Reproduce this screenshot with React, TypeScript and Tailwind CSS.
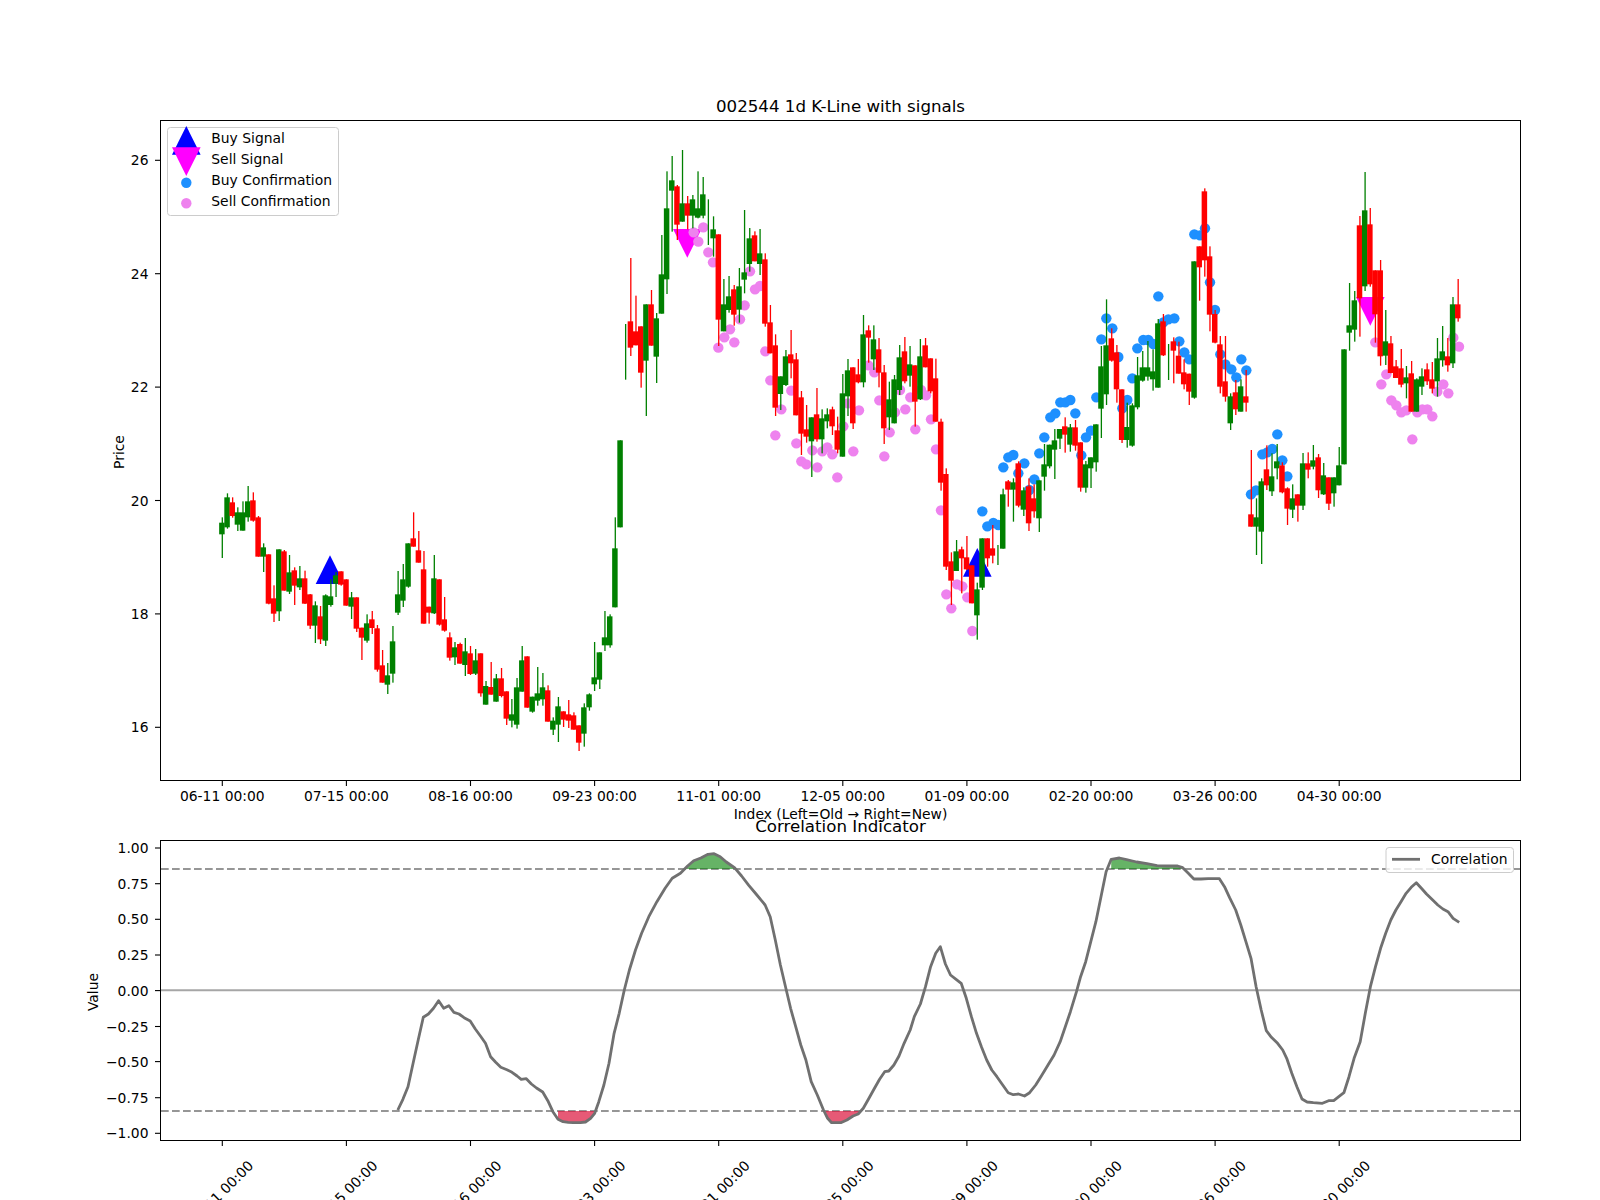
// 002544 daily K-line figure. Candle and marker data were read off the chart,
// so values are stored in crop pixels (3x) with the origin of the crop they came from.
type Row = [number, number, number, number, "G" | "R"]
type Pt = [number, number]

const barX = (i: number) => 222.3 + 5.171 * i
const TICKS = ["06-11 00:00", "07-15 00:00", "08-16 00:00", "09-23 00:00", "11-01 00:00", "12-05 00:00", "01-09 00:00", "02-20 00:00", "03-26 00:00", "04-30 00:00"]
const tickX = TICKS.map((_, i) => 222.3 + 124.1 * i)

// wick top, body top, body bottom, wick bottom, colour
const seg0: Row[] = [
  [112,128,163,234,"G"],[40,52,142,146,"G"],[52,67,108,113,"R"],[82,97,134,153,"G"],[64,97,152,152,"G"],[18,64,112,125,"G"],[37,61,122,125,"R"],[108,112,230,230,"R"],[190,202,230,276,"G"],[223,223,371,373,"R"],
  [316,355,401,426,"R"],[208,208,394,423,"G"],[210,214,332,332,"R"],[225,277,335,342,"G"],[262,271,317,375,"R"],[258,295,322,330,"G"],[272,295,371,372,"R"],[342,343,437,447,"R"],[364,376,437,489,"G"],[378,409,478,492,"R"],
  [343,346,482,498,"G"],[298,349,375,380,"G"],[276,286,311,351,"G"],[274,274,314,317,"R"],[298,298,377,377,"R"],[336,352,380,417,"G"],[352,352,446,456,"R"],[443,443,473,540,"R"],[403,430,482,488,"G"],[393,418,444,462,"R"],
  [435,445,569,575,"R"],[510,556,608,608,"R"],[549,586,614,642,"G"],[438,484,581,608,"G"],[273,343,398,405,"G"],[252,298,362,381,"G"],[190,190,320,323,"G"],[97,175,200,200,"R"],[153,211,248,248,"R"],[213,268,431,431,"R"],
  [380,380,398,431,"R"],[225,295,400,402,"G"],[298,298,434,437,"R"],[351,418,452,455,"R"],[457,472,533,542,"R"],[486,502,532,555,"G"],[488,492,551,551,"R"],[474,514,555,588,"G"],[498,520,582,585,"R"],[507,541,581,585,"G"],
  [520,520,640,650,"R"],[603,618,674,674,"G"],[546,621,644,644,"R"],[582,595,665,665,"G"],[564,595,648,652,"R"],[634,634,716,735,"R"],[657,703,722,742,"G"],[594,622,734,746,"G"],[498,541,635,635,"G"],[529,529,683,683,"R"],
  [650,650,695,698,"G"],[561,640,662,677,"G"],[579,622,658,677,"G"],[616,631,725,725,"R"],[712,722,749,765,"G"],[651,679,734,786,"G"],[694,694,719,741,"R"],[660,703,722,744,"R"],[697,706,749,749,"R"],[736,736,788,813,"R"],
  [670,682,761,800,"G"],[640,643,682,692,"G"],[486,592,613,633,"G"],[517,517,599,627,"G"],[393,472,496,513,"G"],[403,409,496,503,"G"],[112,205,382,382,"G"],
]
const seg1: Row[] = [
  [931,931,1192,1192,"G"],[582,660,660,749,"G"],[384,574,653,678,"R"],[497,604,646,646,"R"],[589,589,728,773,"R"],[523,523,692,858,"G"],[480,523,647,647,"R"],[549,565,680,759,"G"],[315,433,551,551,"G"],[124,235,448,492,"G"],
  [78,151,182,305,"G"],[165,169,284,330,"R"],[60,220,275,275,"G"],[198,220,257,298,"R"],[195,208,257,295,"G"],[124,235,263,265,"G"],[141,193,257,265,"G"],[208,280,280,345,"G"],[259,298,325,380,"G"],[313,313,569,648,"R"],
  [447,523,604,604,"G"],[438,499,540,548,"G"],[465,478,554,587,"R"],[414,469,539,578,"G"],[240,427,449,490,"G"],[294,325,402,425,"G"],[304,316,394,394,"R"],[297,370,402,435,"G"],[370,388,581,590,"R"],[525,577,670,670,"R"],
  [613,646,833,858,"R"],[739,739,792,840,"G"],[660,679,765,768,"G"],[600,673,700,745,"R"],[669,688,856,856,"R"],[783,802,911,975,"R"],[825,898,920,938,"R"],[862,862,934,1041,"G"],[774,853,928,935,"R"],[838,865,928,970,"G"],
  [835,853,874,895,"G"],[830,838,889,915,"R"],[860,901,959,970,"R"],[732,790,980,980,"G"],[687,721,799,858,"G"],[712,712,880,897,"R"],[687,733,757,760,"R"],[555,613,757,772,"G"],[586,601,623,698,"R"],[586,628,688,720,"G"],
  [624,658,728,772,"R"],[705,727,895,942,"R"],[755,808,862,900,"G"],[735,748,880,880,"G"],[645,682,780,795,"G"],[621,664,754,760,"R"],[648,703,737,770,"G"],[706,706,815,890,"R"],[627,679,808,810,"G"],[624,646,712,712,"R"],
  [685,685,784,790,"R"],[686,745,875,875,"R"],[866,875,1058,1082,"R"],
]
const seg2: Row[] = [
  [205,222,500,510,"R"],[457,484,542,615,"R"],[420,454,513,513,"G"],[440,448,475,580,"R"],[408,472,508,510,"R"],[496,496,610,610,"R"],[548,568,646,719,"G"],[415,415,563,570,"G"],[415,415,475,500,"R"],[375,445,467,490,"R"],
  [435,465,465,495,"G"],[266,283,446,446,"G"],[240,244,269,320,"R"],[235,247,269,365,"G"],[184,190,317,322,"R"],[262,271,329,348,"G"],[235,259,370,393,"R"],[253,295,334,353,"R"],[241,241,355,396,"G"],[132,193,230,272,"G"],
  [134,134,199,205,"G"],[87,121,149,237,"G"],[87,87,116,147,"G"],[52,79,104,158,"R"],[72,82,134,155,"G"],[60,82,137,152,"R"],[127,127,263,275,"R"],[183,193,263,278,"G"],[172,172,205,264,"G"],[73,73,187,215,"G"],
]
const seg3: Row[] = [
  [528,589,716,804,"G"],[388,526,673,705,"G"],[475,505,572,575,"R"],[525,547,658,698,"R"],[658,658,810,819,"R"],[698,771,810,833,"G"],[700,706,827,830,"G"],[561,616,712,718,"G"],[543,592,632,635,"G"],[513,592,620,632,"G"],
  [538,604,628,662,"G"],[447,460,653,653,"G"],[432,454,556,558,"R"],[522,576,576,630,"G"],[502,514,542,640,"R"],[515,557,611,611,"R"],[568,607,643,658,"R"],[611,611,665,705,"R"],[274,274,683,686,"G"],[229,229,292,392,"R"],
  [55,64,271,320,"R"],[229,259,434,484,"R"],[420,432,518,520,"R"],[498,523,650,670,"R"],[498,634,680,695,"R"],
]
const seg4: Row[] = [
  [730,739,820,840,"G"],[690,727,778,795,"R"],[688,709,785,785,"G"],[660,739,758,785,"R"],[900,1093,1130,1130,"R"],[1045,1102,1130,1215,"G"],[985,994,1145,1242,"G"],[886,958,1006,1020,"R"],[910,979,1024,1038,"G"],[882,934,955,988,"G"],
  [937,946,1027,1030,"R"],[1012,1015,1076,1125,"R"],[1003,1045,1079,1104,"G"],[1033,1033,1067,1115,"R"],[909,940,1067,1080,"G"],[907,940,959,985,"R"],[885,931,950,958,"G"],[912,922,1021,1044,"R"],[939,976,1033,1035,"G"],[982,982,1061,1080,"R"],
  [982,982,1030,1070,"G"],[891,946,1006,1006,"G"],[598,598,943,943,"G"],[399,526,548,602,"G"],[423,451,539,575,"G"],[198,226,445,560,"R"],[66,181,409,423,"G"],[174,223,403,410,"R"],[361,361,493,578,"R"],[330,361,619,647,"R"],
  [480,574,617,645,"G"],[558,580,669,670,"R"],[630,649,684,684,"R"],[597,655,704,712,"R"],[648,682,700,745,"G"],[633,670,785,785,"R"],[685,688,785,785,"G"],[655,679,710,735,"G"],[640,658,694,705,"R"],[636,688,716,730,"R"],
  [564,625,694,740,"G"],[528,604,631,650,"G"],[564,619,646,665,"R"],[441,463,640,654,"G"],[387,463,505,515,"R"],
]
const segments: { oy: number; rows: Row[] }[] = [
  { oy: 480, rows: seg0 },
  { oy: 130, rows: seg1 },
  { oy: 400, rows: seg2 },
  { oy: 170, rows: seg3 },
  { oy: 150, rows: seg4 },
]
const candles = segments.flatMap((s) =>
  s.rows.map(([wt, bt, bb, wb, c]) => ({
    wt: s.oy + wt / 3,
    bt: s.oy + bt / 3,
    bb: s.oy + bb / 3,
    wb: s.oy + wb / 3,
    color: c === "G" ? "#008000" : "#ff0000",
  }))
)

const crop = (ox: number, oy: number, pts: Pt[]): Pt[] => pts.map(([x, y]) => [ox + x / 3, oy + y / 3])

const sellDots: Pt[] = [
  ...crop(600, 130, [[281,307],[295,335],[310,292],[325,367],[339,397],[450,424],[465,478],[480,468],[434,526],[420,568],[390,598],[373,622],[403,637],[355,653],[496,664],[511,751],[574,782],[544,838],[526,916],[589,940],[604,994],[619,1003],[637,961],[652,1012],[667,964],[682,952],[697,973],[712,1042],[760,964],[730,889],[744,820],[777,841],[805,706],[823,727],[838,811],[853,979],[869,907],[885,847],[900,780],[916,838],[931,802],[946,898],[963,780],[978,796],[993,868],[1008,958],[1023,1141]]),
  ...crop(900, 400, [[171,553],[187,559],[139,583],[202,592],[154,625],[217,693]]),
  ...crop(1200, 150, [[526,577],[544,703],[559,673],[574,751],[589,766],[604,787],[619,781],[652,787],[637,868],[667,778],[682,778],[697,799],[712,725],[730,703],[745,730],[760,563],[777,590]]),
]
const buyDots: Pt[] = [
  ...crop(900, 400, [[247,334],[262,379],[280,369],[295,375],[310,202],[325,172],[340,165],[355,220],[373,190],[403,238],[388,270],[418,160],[433,112],[451,52],[544,166],[558,112],[573,92]]),
  ...crop(1050, 170, [[16,730],[31,697],[46,697],[61,690],[76,730],[139,682],[154,508],[169,445],[187,475],[205,561],[217,715],[232,690],[247,625],[262,535],[280,510],[295,510],[310,522],[325,379],[340,457],[355,448],[373,445],[388,514],[403,547],[418,568],[433,193],[450,196],[465,175],[480,337],[495,420],[511,553],[526,583],[544,598],[559,622],[574,568],[589,601]]),
  ...crop(1200, 150, [[153,1033],[168,1021],[187,913],[202,907],[217,897],[232,853],[247,931],[262,979]]),
]

const up = (cx: number, top: number) => `${cx},${top} ${cx + 14.3},${top + 28.7} ${cx - 14.3},${top + 28.7}`
const down = (cx: number, top: number) => `${cx - 14.3},${top} ${cx + 14.3},${top} ${cx},${top + 28.7}`

// correlation curve, from crops that were squeezed to 1.96x wide and 3x high
const wide = (ox: number, pts: Pt[]): Pt[] => pts.map(([x, y]) => [ox + x / 1.96, 800 + y / 3])
const curve: Pt[] = [
  ...wide(60, [[662,930],[672,898],[682,860],[692,790],[702,720],[712,652],[722,642],[732,625],[742,602],[752,625],[762,617],[772,637],[782,642],[792,653],[804,663],[814,687],[824,708],[834,730],[844,770],[854,787],[864,802],[876,809],[886,817],[896,828],[904,838],[914,836],[924,852],[934,864],[946,876],[956,902],[966,935],[976,958],[986,965],[996,967],[1006,968],[1020,968],[1030,966],[1040,955],[1048,940],[1056,905],[1066,855],[1076,790],[1086,700],[1096,640],[1106,570],[1116,510],[1128,450],[1140,400],[1154,350],[1170,305],[1186,265],[1200,235],[1216,220],[1230,198],[1242,182],[1256,174],[1270,163],[1282,161],[1294,170],[1306,186],[1322,203],[1336,228],[1350,256],[1366,285],[1382,315],[1392,350],[1402,420],[1412,495],[1422,560],[1432,625],[1442,680],[1452,735],[1462,780]]),
  ...wide(800, [[22,845],[34,885],[46,930],[54,955],[62,968],[80,968],[92,960],[104,948],[114,942],[124,925],[134,898],[146,865],[156,838],[166,815],[174,813],[184,795],[194,768],[204,730],[216,690],[224,650],[236,612],[246,560],[256,500],[266,460],[275,440],[285,492],[295,525],[306,538],[316,550],[326,595],[336,650],[346,700],[356,742],[366,780],[376,810],[386,830],[396,852],[408,878],[418,884],[428,882],[440,888],[450,878],[462,855],[474,826],[486,795],[498,765],[510,725],[520,680],[530,635],[542,575],[550,530],[560,485],[570,425],[580,365],[590,290],[600,215],[610,178],[626,174],[640,179],[660,186],[680,191],[700,197],[720,198],[740,198],[750,203],[760,218],[772,237],[786,237],[800,236],[822,236],[832,260],[842,293],[854,330],[864,375],[874,425],[884,475],[894,560],[904,630],[914,692],[924,712],[936,730],[946,750],[954,775],[964,820],[974,860],[984,897],[994,906],[1006,908],[1024,910],[1036,902],[1046,902],[1056,890],[1066,878],[1076,830],[1086,775],[1098,725],[1108,640],[1118,560],[1128,500],[1138,445],[1148,400],[1158,360],[1168,330],[1178,305],[1188,280],[1198,262],[1208,248],[1218,265],[1228,282],[1240,300],[1250,315],[1260,327],[1270,335],[1280,355],[1292,367]]),
]
const poly = (pts: Pt[]) => pts.map(([x, y]) => `${x.toFixed(1)},${y.toFixed(1)}`).join(" ")
const greenFills = [
  wide(60, [[1226,207],[1230,198],[1242,182],[1256,174],[1270,163],[1282,161],[1294,170],[1306,186],[1322,203],[1326,207]]),
  wide(800, [[610,207],[610,178],[626,174],[640,179],[660,186],[680,191],[700,197],[720,198],[740,198],[750,203],[754,207]]),
]
const redFills = [
  wide(60, [[976,933],[976,958],[986,965],[996,967],[1006,968],[1020,968],[1030,966],[1040,955],[1048,940],[1050,933]]),
  wide(800, [[50,933],[54,955],[62,968],[80,968],[92,960],[104,948],[114,942],[120,933]]),
]

const priceTicks: [string, number][] = [["26", 160.3], ["24", 273.7], ["22", 387.1], ["20", 500.5], ["18", 613.9], ["16", 727.3]]
const corrTicks: [string, number][] = [["1.00", 848], ["0.75", 883.7], ["0.50", 919.3], ["0.25", 955], ["0.00", 990.6], ["−0.25", 1026.5], ["−0.50", 1061.6], ["−0.75", 1097.7], ["−1.00", 1133.3]]

function YTicks({ items }: { items: [string, number][] }) {
  return (
    <>
      {items.map(([label, y]) => (
        <g key={label}>
          <line x1={155} x2={161} y1={y} y2={y} stroke="#000" strokeWidth={1.1} />
          <text x={148.5} y={y + 5} textAnchor="end">{label}</text>
        </g>
      ))}
    </>
  )
}

function PriceChart() {
  return (
    <svg width={1359} height={659} viewBox="161 121 1359 659" className="block overflow-visible text-[13.89px] fill-black">
      <polygon points={up(330, 555.3)} fill="#0000ff" />
      <polygon points={up(977.3, 548)} fill="#0000ff" />
      <polygon points={down(687.3, 229)} fill="#ff00ff" />
      <polygon points={down(1370.3, 297)} fill="#ff00ff" />
      {sellDots.map(([x, y], i) => <circle key={i} cx={x} cy={y} r={5.2} fill="#ee82ee" />)}
      {buyDots.map(([x, y], i) => <circle key={i} cx={x} cy={y} r={5.2} fill="#1e90ff" />)}
      {candles.map((c, i) => (
        <g key={i} fill={c.color}>
          <rect x={barX(i) - 0.65} y={c.wt} width={1.3} height={c.wb - c.wt} />
          {c.bb > c.bt && <rect x={barX(i) - 3.15} y={c.bt} width={5.5} height={c.bb - c.bt} />}
        </g>
      ))}

      <YTicks items={priceTicks} />
      {tickX.map((x, i) => (
        <g key={x}>
          <line x1={x} x2={x} y1={780} y2={786} stroke="#000" strokeWidth={1.1} />
          <text x={x} y={801} textAnchor="middle">{TICKS[i]}</text>
        </g>
      ))}
      <text transform="rotate(-90 119 452)" x={119} y={457} textAnchor="middle">Price</text>

      <rect x={167.5} y={127.5} width={171} height={88} rx={3} fill="#fff" fillOpacity={0.8} stroke="#cccccc" />
      <polygon points={up(186.3, 126)} fill="#0000ff" />
      <polygon points={down(186.3, 147.3)} fill="#ff00ff" />
      <circle cx={186.3} cy={182.7} r={5.2} fill="#1e90ff" />
      <circle cx={186.3} cy={203.3} r={5.2} fill="#ee82ee" />
      <text x={211.3} y={143.3}>Buy Signal</text>
      <text x={211.3} y={164.3}>Sell Signal</text>
      <text x={211.3} y={185.3}>Buy Confirmation</text>
      <text x={211.3} y={206.3}>Sell Confirmation</text>
    </svg>
  )
}

function CorrelationChart() {
  return (
    <svg width={1359} height={299} viewBox="161 841 1359 299" className="block overflow-visible text-[13.89px] fill-black">
      <line x1={161} x2={1520} y1={990.3} y2={990.3} stroke="#a6a6a6" strokeWidth={2} />
      <line x1={161} x2={1520} y1={869} y2={869} stroke="#969696" strokeWidth={2.1} strokeDasharray="7.7 3.3" />
      <line x1={161} x2={1520} y1={1111} y2={1111} stroke="#969696" strokeWidth={2.1} strokeDasharray="7.7 3.3" />
      {greenFills.map((f, i) => <polygon key={i} points={poly(f)} fill="#008000" fillOpacity={0.6} />)}
      {redFills.map((f, i) => <polygon key={i} points={poly(f)} fill="#dc143c" fillOpacity={0.7} />)}
      <polyline points={poly(curve)} fill="none" stroke="#707070" strokeWidth={2.8} strokeLinejoin="round" />

      <YTicks items={corrTicks} />
      {tickX.map((x, i) => (
        <g key={x}>
          <line x1={x} x2={x} y1={1140} y2={1146} stroke="#000" strokeWidth={1.1} />
          <text transform={`rotate(-45 ${x - 1.5} 1193)`} x={x - 1.5} y={1198} textAnchor="middle">{TICKS[i]}</text>
        </g>
      ))}
      <text transform="rotate(-90 93 992)" x={93} y={997} textAnchor="middle">Value</text>

      <rect x={1386} y={847.5} width={127.5} height={25} rx={3} fill="#fff" fillOpacity={0.8} stroke="#cccccc" />
      <line x1={1392} x2={1420} y1={859.3} y2={859.3} stroke="#707070" strokeWidth={2.8} />
      <text x={1431} y={864}>Correlation</text>
    </svg>
  )
}

export default function App() {
  return (
    <div className="w-[1600px] h-[1200px] overflow-hidden bg-white text-black font-['DejaVu_Sans',sans-serif]">
      <div className="pl-[160px] pr-[79px] pt-[95px]">
        <div className="h-[24px] mb-[1px] text-center text-[16.67px] leading-[24px]">002544 1d K-Line with signals</div>
        <div className="h-[661px] border border-black">
          <PriceChart />
        </div>
        <div className="mt-[23px] h-[20px] text-center text-[13.89px] leading-[20px]">Index (Left=Old → Right=New)</div>
        <div className="-mt-[9px] h-[24px] text-center text-[16.67px] leading-[24px]">Correlation Indicator</div>
        <div className="mt-[1px] h-[301px] border border-black">
          <CorrelationChart />
        </div>
      </div>
    </div>
  )
}
